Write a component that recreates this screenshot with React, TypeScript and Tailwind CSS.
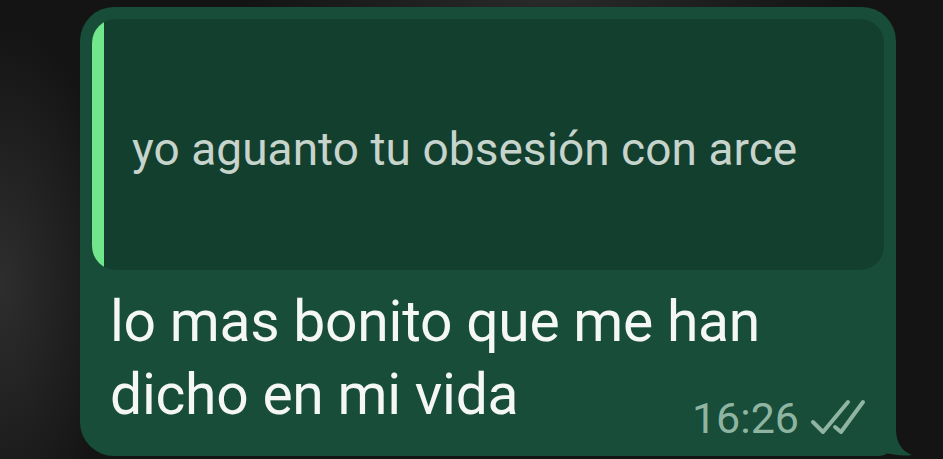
import React from "react";

export default function App() {
  return (
    <div
      className="relative w-[943px] h-[459px] overflow-hidden bg-[#141414] bg-[radial-gradient(ellipse_120px_260px_at_0%_62%,#2e2e2e_0%,#1c1c1c_70%,transparent_100%),radial-gradient(ellipse_300px_40px_at_58%_0%,#2a2a2a_0%,transparent_100%)]"
      style={{ fontFamily: "Roboto, 'Noto Sans', sans-serif" }}
    >
      <div className="pl-[80px] pt-[7px]">
        <div className="relative w-[816px] h-[449px] rounded-[34px] rounded-br-[18px] bg-[#184d39] p-[12px]">
          {/* quoted message */}
          <div className="flex h-[251px] rounded-[24px] bg-[#133f2f] overflow-hidden">
            <div className="w-[12px] shrink-0 bg-[#71e68b]" />
            <div className="pl-[28px] pt-[103px] text-[46px] leading-[54px] tracking-[0.05px] text-[#c6d4cb]">
              yo aguanto tu obsesión con arce
            </div>
          </div>
          {/* main message */}
          <div className="pl-[18px] pr-[18px] pt-[15px] text-[57px] leading-[73px] tracking-[-0.25px] text-[#f4f7f5]">
            <div>lo mas bonito que me han</div>
            <div className="flex items-end justify-between">
              <span>dicho en mi vida</span>
              <span className="flex items-end gap-[11px] mb-[-8px] text-[43px] leading-[42px] tracking-normal text-[#8fb5a2]">
                <span>16:26</span>
                <svg width="56" height="36" viewBox="0 0 56 36" className="mb-[4px]">
                  <path d="M3 23 L13 33 L38 3" fill="none" stroke="#8fb5a2" strokeWidth="4" strokeLinecap="round" strokeLinejoin="round" />
                  <path d="M25 28 L31 33 L53 3" fill="none" stroke="#8fb5a2" strokeWidth="4" strokeLinecap="round" strokeLinejoin="round" />
                </svg>
              </span>
            </div>
          </div>
          {/* tail */}
          <svg
            width="50"
            height="50"
            viewBox="0 0 50 50"
            className="absolute right-[-18px] bottom-[-1px]"
          >
            <path d="M32 0 L32 22 C32 36 38 44 48 48 C40 49.5 28 48 18 45 C12 46 6 48 0 48 L0 0 Z" fill="#184d39" />
          </svg>
        </div>
      </div>
    </div>
  );
}
